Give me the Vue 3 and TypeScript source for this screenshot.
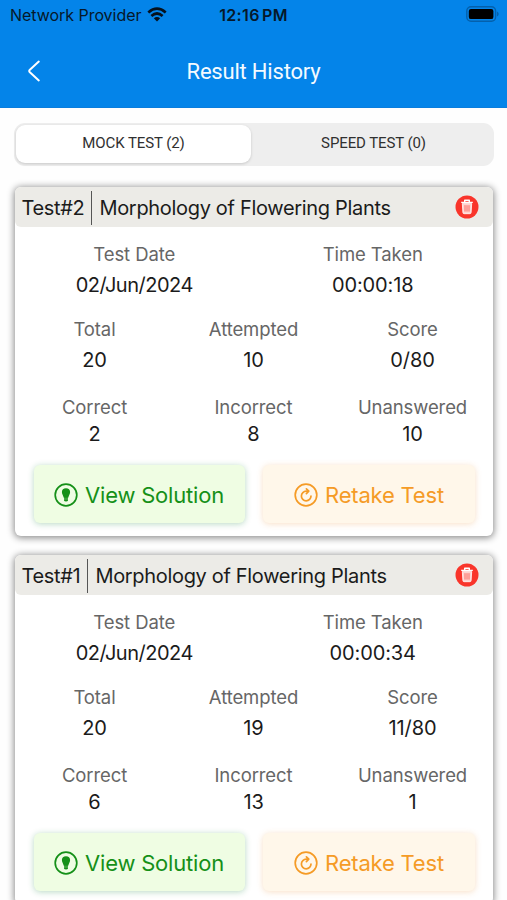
<script setup lang="ts">
interface Result {
  id: number
  topic: string
  date: string
  time: string
  total: number
  attempted: number
  score: string
  correct: number
  incorrect: number
  unanswered: number
}

const results: Result[] = [
  { id: 2, topic: 'Morphology of Flowering Plants', date: '02/Jun/2024', time: '00:00:18', total: 20, attempted: 10, score: '0/80', correct: 2, incorrect: 8, unanswered: 10 },
  { id: 1, topic: 'Morphology of Flowering Plants', date: '02/Jun/2024', time: '00:00:34', total: 20, attempted: 19, score: '11/80', correct: 6, incorrect: 13, unanswered: 1 },
]
</script>

<template>
  <div class="screen">
    <header class="top">
      <div class="status">
        <div class="carrier">
          <span class="carrier-name">Network Provider</span>
          <svg width="20" height="15" viewBox="0 0 20 15">
            <g fill="none" stroke="#06111d" stroke-width="2.7">
              <path d="M1.3 5.4Q10 -2.1 18.7 5.4" />
              <path d="M4.4 8.9Q10 4.1 15.6 8.9" />
            </g>
            <path d="M6.8 11.2Q10 8.6 13.2 11.2L10 14.4Z" fill="#06111d" />
          </svg>
        </div>
        <span class="clock">12:16 PM</span>
        <svg class="battery" width="33" height="16" viewBox="0 0 33 16">
          <rect x="0.8" y="0.8" width="28.8" height="14.4" rx="4.2" fill="none" stroke="#0460ac" stroke-width="1.4" />
          <rect x="2.8" y="2.9" width="24.6" height="10.2" rx="2.2" fill="#000" />
          <path d="M31 5.6q1.7 .8 1.7 2.4t-1.7 2.4z" fill="#0460ac" />
        </svg>
      </div>
      <div class="nav">
        <svg class="back" width="14" height="22" viewBox="0 0 14 22">
          <path d="M11.8 1.6L2.6 10q-.9 1 0 2l9.2 8.4" fill="none" stroke="#fff" stroke-width="2" stroke-linecap="round" stroke-linejoin="round" />
        </svg>
        <h1>Result History</h1>
      </div>
    </header>

    <div class="tabs">
      <button class="tab active">MOCK TEST (2)</button>
      <button class="tab">SPEED TEST (0)</button>
    </div>

    <main class="list">
      <article v-for="r in results" :key="r.id" class="card">
        <div class="card-head">
          <span class="test-id">Test#{{ r.id }}</span>
          <span class="topic">{{ r.topic }}</span>
          <svg class="trash" width="24" height="24" viewBox="0 0 24 24">
            <circle cx="12" cy="12" r="11.5" fill="#f9352b" />
            <path d="M6.2 7.4h11.6M9.7 7V5.3h4.6V7" fill="none" stroke="#fff" stroke-width="1.4" stroke-linejoin="round" />
            <path d="M7.3 8.4h9.4l-.6 9.2q-.1 1.1-1.2 1.1H9.1q-1.1 0-1.2-1.1z" fill="#ffd3cf" stroke="#fff" stroke-width=".8" />
            <path d="M10 10.2v6.4M12 10.2v6.4M14 10.2v6.4" stroke="#f9352b" stroke-width=".65" />
          </svg>
        </div>
        <div class="row two">
          <div class="cell"><span class="label">Test Date</span><span class="value date">{{ r.date }}</span></div>
          <div class="cell"><span class="label">Time Taken</span><span class="value">{{ r.time }}</span></div>
        </div>
        <div class="row">
          <div class="cell"><span class="label">Total</span><span class="value">{{ r.total }}</span></div>
          <div class="cell"><span class="label">Attempted</span><span class="value">{{ r.attempted }}</span></div>
          <div class="cell"><span class="label">Score</span><span class="value">{{ r.score }}</span></div>
        </div>
        <div class="row tight">
          <div class="cell"><span class="label">Correct</span><span class="value">{{ r.correct }}</span></div>
          <div class="cell"><span class="label">Incorrect</span><span class="value">{{ r.incorrect }}</span></div>
          <div class="cell"><span class="label">Unanswered</span><span class="value">{{ r.unanswered }}</span></div>
        </div>
        <div class="actions">
          <button class="action solution">
            <svg width="24" height="24" viewBox="0 0 24 24">
              <circle cx="12" cy="12" r="10.8" fill="none" stroke="currentColor" stroke-width="1.7" />
              <path d="M12 5.2c-2.6 0-4.1 1.6-4.1 3.9 0 2 1.3 3.600 1.900 5.600h4.400c.6-2 1.900-3.600 1.900-5.600 0-2.300-1.500-3.900-4.100-3.900z" fill="currentColor" />
              <path d="M10.100 14.300h3.800v2.900q-.2 1.400-1.900 1.400t-1.900-1.400z" fill="currentColor" />
              <path d="M10.200 16h3.600" stroke="#efffe4" stroke-width=".35" />
            </svg>
            <span>View Solution</span>
          </button>
          <button class="action retake">
            <svg width="24" height="24" viewBox="0 0 24 24">
              <circle cx="12" cy="12" r="10.800" fill="none" stroke="currentColor" stroke-width="1.700" />
              <path d="M14.200 8.200H12.300a4.800 4.800 0 1 0 4.700 4.800" fill="none" stroke="currentColor" stroke-width="1.700" stroke-linecap="round" />
              <path d="M12.400 5.800l2.400 2.400-2.400 2.400" fill="none" stroke="currentColor" stroke-width="1.700" stroke-linecap="round" stroke-linejoin="round" />
            </svg>
            <span>Retake Test</span>
          </button>
        </div>
      </article>
    </main>
  </div>
</template>

<style>
body {
  overflow: hidden;
  background: #fefefe;
}
</style>

<style scoped>
.screen {
  height: 900px;
  overflow: hidden;
  background: #fefefe;
  font-family: Inter, "Liberation Sans", sans-serif;
  color: #1b1b1b;
}
.screen * {
  box-sizing: border-box;
}
svg {
  display: block;
  flex: none;
}
button {
  border: 0;
  padding: 0;
  font-family: inherit;
  color: inherit;
}
.top {
  height: 108px;
  background: #0484e9;
  border-bottom: 1px solid #0a7ddd;
}
.status {
  display: grid;
  grid-template-columns: 1fr auto 1fr;
  align-items: center;
  height: 30px;
  padding: 0 8px 0 10px;
  color: #06182a;
}
.carrier {
  display: flex;
  align-items: center;
  gap: 6px;
  margin-top: -1px;
}
.carrier-name {
  font-size: 16px;
  line-height: 30px;
  letter-spacing: -0.04px;
  white-space: nowrap;
}
.clock {
  margin: -1px 2px 0 0;
  font-size: 16px;
  font-weight: 600;
  line-height: 30px;
  letter-spacing: 0.35px;
  word-spacing: -2px;
}
.battery {
  justify-self: end;
  margin-top: -2px;
}
.nav {
  display: grid;
  grid-template-columns: 60px 1fr 60px;
  align-items: center;
  height: 82px;
}
.back {
  margin-left: 27px;
}
h1 {
  margin: 0;
  padding-top: 1px;
  font-family: Roboto, sans-serif;
  font-size: 22px;
  letter-spacing: -0.2px;
  line-height: 30px;
  font-weight: 400;
  text-align: center;
  color: #f4faff;
}
.tabs {
  display: grid;
  grid-template-columns: 235px 1fr;
  height: 43px;
  margin: 14.5px 13px 0 14px;
  padding: 2px 0 2.5px 2px;
  background: #eee;
  border-radius: 11px;
}
.tab {
  padding: 0 0 1px 2px;
  background: none;
  font-family: Roboto, sans-serif;
  font-size: 15px;
  letter-spacing: -0.1px;
  color: #303030;
}
.tab.active {
  padding-left: 0;
  background: #fff;
  border-radius: 9px;
  box-shadow: 0 1px 3px rgba(0, 0, 0, 0.16);
}
.list {
  display: flex;
  flex-direction: column;
  gap: 19px;
  padding: 21.5px 14px 0 15px;
}
.card {
  height: 349px;
  background: #fff;
  border-radius: 6px;
  box-shadow: 0 1px 7px 1px rgba(0, 0, 0, 0.45);
}
.card-head {
  display: flex;
  align-items: center;
  height: 40px;
  padding: 1px 14px 0 6.4px;
  background: #ecebe7;
  border-radius: 6px;
  font-size: 20px;
  line-height: 34px;
  letter-spacing: -0.32px;
}
.test-id {
  padding-right: 7px;
  border-right: 1.5px solid #555;
}
.topic {
  padding-left: 7px;
}
.trash {
  margin: -1px 0 0 auto;
}
.row {
  display: grid;
  grid-template-columns: repeat(3, 1fr);
  height: 76px;
  padding: 12px 1px 0 0;
}
.row.two {
  grid-template-columns: repeat(2, 1fr);
  padding-top: 13px;
}
.row.tight {
  height: 86px;
  padding-top: 14px;
}
.cell {
  display: flex;
  flex-direction: column;
  align-items: center;
  gap: 3px;
}
.tight .cell {
  gap: 0;
}
.tight .value {
  margin-top: -1px;
}
.label {
  font-size: 18.5px;
  line-height: 28px;
  letter-spacing: -0.1px;
  color: #666;
}
.value {
  font-size: 20px;
  line-height: 28px;
  letter-spacing: -0.12px;
}
.value.date {
  letter-spacing: -0.5px;
}
.two .value {
  margin-top: -0.5px;
}
.actions {
  display: grid;
  grid-template-columns: 211px 212px;
  gap: 18px;
  padding: 0 18px 0 19px;
}
.action {
  display: flex;
  align-items: center;
  justify-content: center;
  gap: 7px;
  height: 58px;
  padding: 2px 1px 0 0;
  border-radius: 6px;
  font-size: 22px;
  letter-spacing: -0.2px;
}
.solution {
  background: #effde3;
  color: #159018;
  box-shadow: 0 1px 6px rgba(20, 130, 60, 0.3);
}
.retake {
  padding-right: 0;
  background: #fff7ea;
  color: #f59b26;
  box-shadow: 0 1px 6px rgba(230, 140, 50, 0.28);
}
</style>
